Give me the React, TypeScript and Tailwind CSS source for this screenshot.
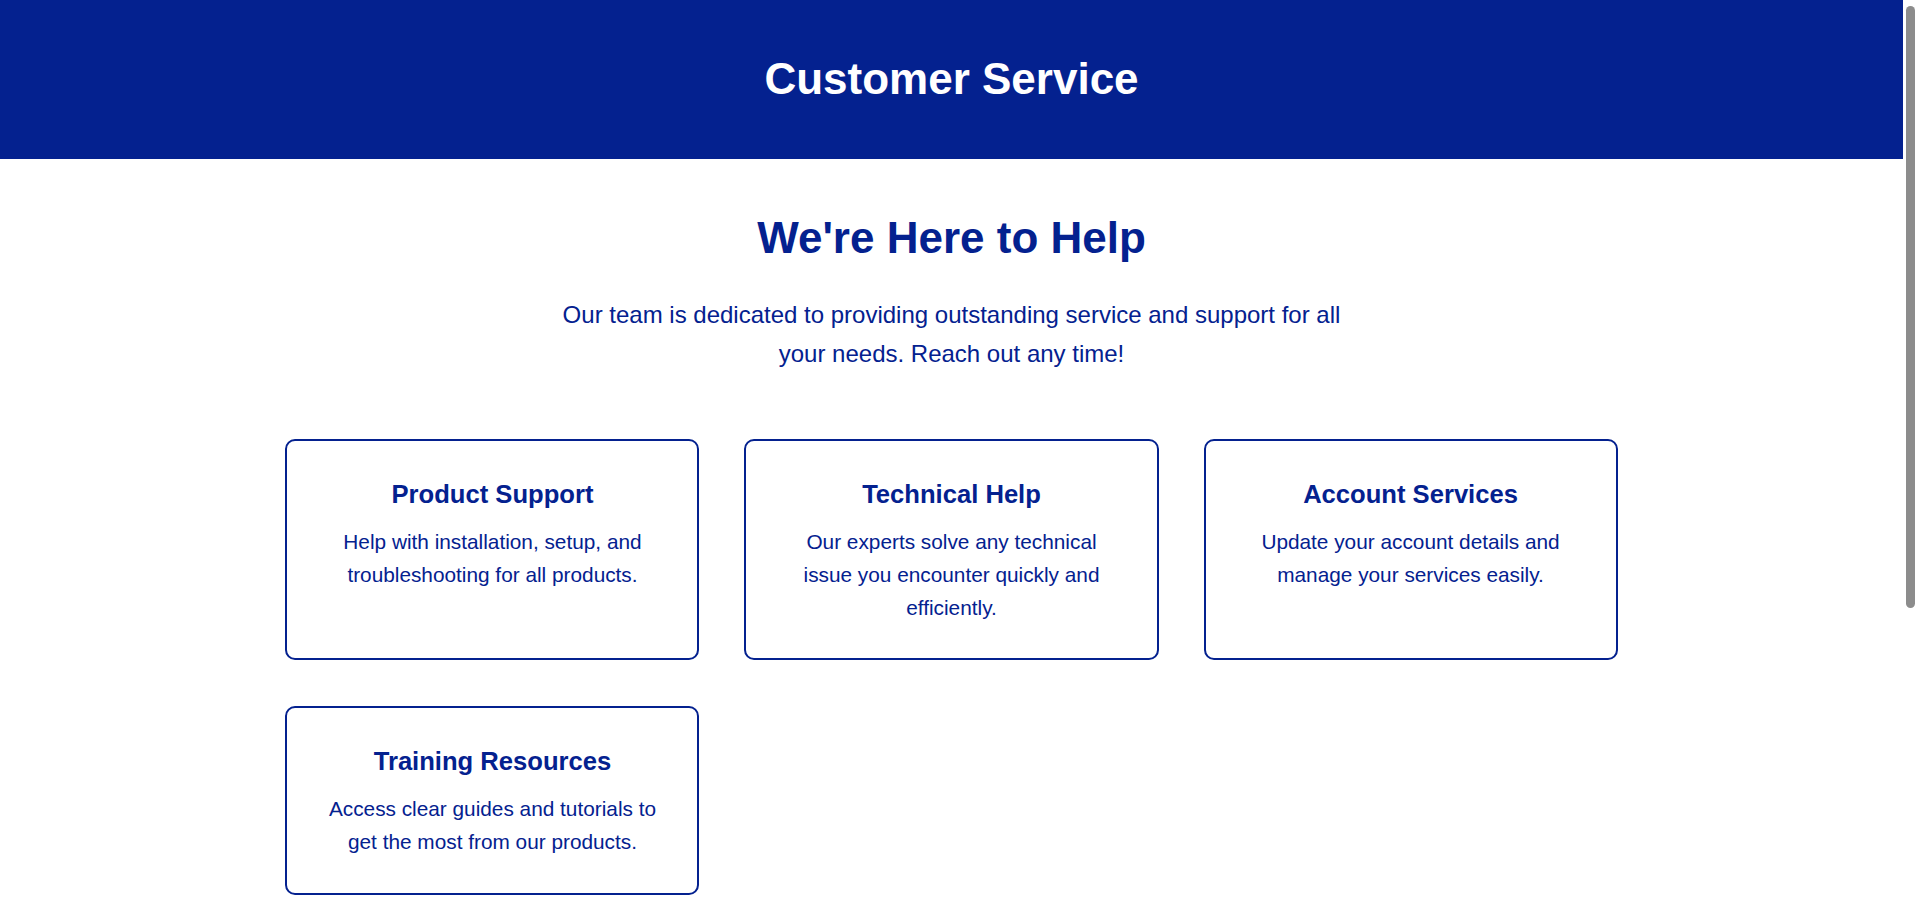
import React from "react";

const services = [
  {
    title: "Product Support",
    text: "Help with installation, setup, and troubleshooting for all products.",
  },
  {
    title: "Technical Help",
    text: "Our experts solve any technical issue you encounter quickly and efficiently.",
  },
  {
    title: "Account Services",
    text: "Update your account details and manage your services easily.",
  },
  {
    title: "Training Resources",
    text: "Access clear guides and tutorials to get the most from our products.",
  },
];

export default function App() {
  return (
    <div
      className="flex min-h-[1352px] items-start bg-white text-[#04218f]"
      style={{ fontFamily: '"Liberation Sans", Arial, sans-serif' }}
    >
      <div className="min-w-0 flex-1">
        <header className="flex h-[159px] items-center justify-center bg-[#04218f]">
          <h1 className="text-[44px] font-bold leading-[1.15] text-white">Customer Service</h1>
        </header>

        <main className="flex flex-col items-center pb-[120px]">
          <h2 className="mt-[54px] text-[44px] font-bold leading-[1.15] text-[#04218f]">
            We're Here to Help
          </h2>
          <p className="mt-[31px] max-w-[800px] text-center text-[24px] leading-[39.5px] text-[#04218f]">
            Our team is dedicated to providing outstanding service and support for all your needs. Reach out any time!
          </p>

          <div className="mt-[65px] grid w-[70%] grid-cols-3 gap-x-[45px] gap-y-[46px]">
            {services.map((s) => (
              <div
                key={s.title}
                className="rounded-[10px] border-2 border-[#04218f] px-[40px] pb-[33.5px] pt-[39px] text-center"
              >
                <h3 className="mb-[18px] text-[25.6px] font-bold leading-[28.3px] text-[#04218f]">{s.title}</h3>
                <p className="text-[20.8px] leading-[32.9px] text-[#04218f]">{s.text}</p>
              </div>
            ))}
          </div>
        </main>
      </div>

      <aside className="sticky top-0 flex h-[906px] w-[15px] shrink-0 justify-center bg-white pt-[6px]">
        <div className="h-[602px] w-[9px] rounded-full bg-[#8c8c8c]" />
      </aside>
    </div>
  );
}
